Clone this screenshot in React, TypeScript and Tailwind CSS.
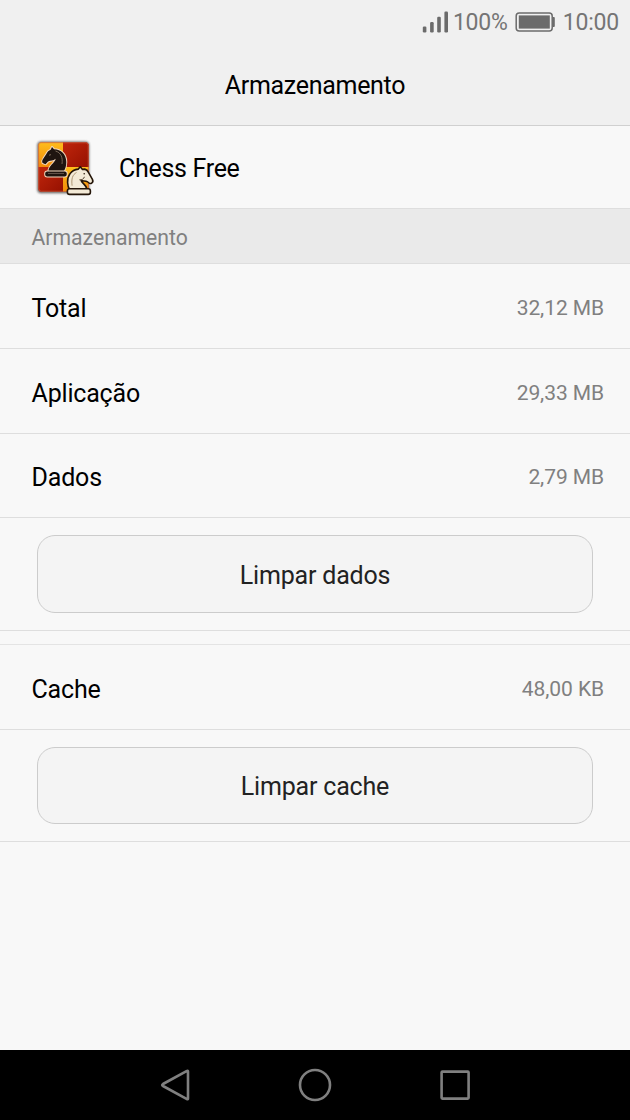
import React from 'react';

interface StorageRowProps {
  label: string;
  value: string;
  className?: string;
}

function SignalIcon() {
  return (
    <svg width="27" height="22" viewBox="0 0 27 22" fill="#6b6b6b">
      <rect x="0.8" y="15.5" width="3.6" height="6" rx="1.2" />
      <rect x="8.1" y="11" width="3.6" height="10.5" rx="1.2" />
      <rect x="15.2" y="5.7" width="3.6" height="15.8" rx="1.2" />
      <rect x="22.4" y="0.5" width="3.6" height="21" rx="1.2" />
    </svg>
  );
}

function BatteryIcon() {
  return (
    <svg width="40" height="20" viewBox="0 0 40 20">
      <rect x="1.2" y="1" width="36" height="18" rx="3" fill="none" stroke="#6b6b6b" strokeWidth="1.5" />
      <rect x="3.8" y="3.4" width="31" height="13.2" fill="#6b6b6b" />
      <path d="M37.5 5h1.3q1 0 1 1v8q0 1-1 1h-1.3z" fill="#6b6b6b" />
    </svg>
  );
}

function ChessIcon() {
  return (
    <svg width="70" height="66" viewBox="0 0 70 66">
      <defs>
        <linearGradient id="red" x1="0" y1="0" x2="1" y2="1">
          <stop offset="0" stopColor="#c0260c" />
          <stop offset="1" stopColor="#941000" />
        </linearGradient>
        <linearGradient id="gold" x1="0" y1="0" x2="0" y2="1">
          <stop offset="0" stopColor="#ffbe1c" />
          <stop offset="1" stopColor="#f28a08" />
        </linearGradient>
        <clipPath id="board">
          <rect x="8.5" y="8.5" width="50" height="49" rx="2.5" />
        </clipPath>
        <filter id="shade" x="-10%" y="-10%" width="120%" height="120%">
          <feGaussianBlur stdDeviation="0.9" />
        </filter>
      </defs>
      <rect x="7.2" y="7.6" width="52" height="51.6" rx="4" fill="#55504e" opacity="0.85" filter="url(#shade)" />
      <g clipPath="url(#board)">
        <rect x="8" y="8" width="52" height="50" fill="url(#red)" />
        <rect x="8" y="8" width="25" height="25" fill="url(#gold)" />
        <rect x="33" y="33" width="27" height="26" fill="url(#gold)" />
        <rect x="8" y="33" width="25" height="26" fill="url(#red)" />
        <rect x="33" y="8" width="27" height="25" fill="url(#red)" />
      </g>
      <rect x="8.8" y="8.8" width="49.4" height="48.4" rx="2.5" fill="none" stroke="#dc7050" strokeWidth="0.7" opacity="0.7" />

      <g stroke="#f4d9bf" strokeWidth="2" strokeLinejoin="round" paintOrder="stroke">
        <path
          d="M22 13l2 2.2C31 15.5 36.2 20 36.3 28c0 4-.8 6.5-2.3 9H18.5c0-5.5 6.3-7.5 7.2-12.2-2.5 2.3-5.3 1.4-7.7 2.7l-2.5 2.7-2.9-1.2c-.9-1.8-.3-3 .8-4.5l3.1-4.8c.8-2 2.3-3.3 4.2-4z"
          fill="#1f1510"
        />
        <rect x="15.2" y="37.5" width="21.5" height="5" rx="2" fill="#1f1510" />
      </g>
      <path d="M25.5 17c5.3 1.5 7.5 6.5 6.5 13M19 21.2l2-.6" fill="none" stroke="#82715f" strokeWidth="0.9" />
      <path d="M18 39.5h16" stroke="#605047" strokeWidth="1" />

      <g stroke="#241509" strokeWidth="1.6" strokeLinejoin="round">
        <path
          d="M50.3 32.8l-2.1 2.3C41 36 37.3 41.8 37.6 48.5c.1 3 .8 5.2 2 7.2h17.3c.2-4.4-4.6-6-5.8-9.2 2.2.9 4.2.2 6.5 1.4 1.5.8 2.1 2.6 4.1 1.2 1.5-1 1.5-2.3.6-4l-4-6.9c-.6-1.8-1.7-2.7-3.5-3.1l-2.3.3z"
          fill="#f3ead7"
        />
        <rect x="37.4" y="54.8" width="23" height="5.6" rx="2.2" fill="#f3ead7" />
      </g>
      <path d="M46.5 38.5c-4 2.2-5.3 6.2-4.4 13.2" fill="none" stroke="#ae9775" strokeWidth="1" />
      <path d="M49.4 45.8c2.4.4 4.6-1 5-3" fill="none" stroke="#55422e" strokeWidth="1" />
      <circle cx="54.2" cy="39.8" r="0.8" fill="#2a1a0d" />
    </svg>
  );
}

function StorageRow({ label, value, className = 'h-[85px] pt-1.5' }: StorageRowProps) {
  return (
    <div className={`flex items-center justify-between border-b border-[#dedede] pl-[31.5px] pr-[26px] ${className}`}>
      <span className="text-[25px] leading-8 tracking-[-0.18px] text-black">{label}</span>
      <span className="-mt-0.5 text-[21px] leading-8 tracking-[-0.08px] text-[#808080]">{value}</span>
    </div>
  );
}

function ActionButton({ children, className = 'h-[78px]' }: { children: React.ReactNode; className?: string }) {
  return (
    <button className={`flex w-full items-center justify-center rounded-[18px] border border-[#cccccc] bg-[#f4f4f4] text-[25px] leading-8 tracking-[-0.18px] text-[#222222] ${className}`}>
      {children}
    </button>
  );
}

export default function App() {
  return (
    <div className="flex h-[1120px] w-[630px] flex-col overflow-hidden bg-[#f8f8f8] font-['Roboto',sans-serif]">
      <header className="flex h-[126px] shrink-0 flex-col border-b border-[#d0d0d0] bg-[#f0f0f0]">
        <div className="flex h-11 items-center justify-end pr-[11px] text-[23px] leading-7 tracking-[-0.2px] text-[#757575]">
          <span className="-mt-px">
            <SignalIcon />
          </span>
          <span className="ml-1 pt-0.5">100%</span>
          <span className="ml-[7px]">
            <BatteryIcon />
          </span>
          <span className="ml-2 pt-0.5">10:00</span>
        </div>
        <h1 className="flex flex-1 items-center justify-center pt-0.5 text-[25px] leading-8 tracking-[-0.3px] text-black">
          Armazenamento
        </h1>
      </header>

      <main className="flex-1">
        <div className="flex h-[83px] items-center border-b border-[#dedede] pl-[30px]">
          <ChessIcon />
          <span className="ml-[19px] pt-1 text-[25px] leading-8 tracking-[-0.3px] text-black">Chess Free</span>
        </div>
        <h2 className="flex h-[55px] items-center border-b border-[#dedede] bg-[#eaeaea] pl-[31.5px] pt-1 text-[21.2px] leading-7 text-[#808080]">
          Armazenamento
        </h2>

        <StorageRow label="Total" value="32,12 MB" />
        <StorageRow label="Aplicação" value="29,33 MB" />
        <StorageRow label="Dados" value="2,79 MB" className="h-[84px] pt-[5px]" />
        <div className="h-[113px] border-b border-[#dedede] px-[37px] pt-[17px]">
          <ActionButton className="h-[78px] pt-1">Limpar dados</ActionButton>
        </div>

        <div className="h-[14px] border-b border-[#e4e4e4]" />
        <StorageRow label="Cache" value="48,00 KB" />
        <div className="h-28 border-b border-[#dedede] px-[37px] pt-[17px]">
          <ActionButton className="h-[77px] pt-[3px]">Limpar cache</ActionButton>
        </div>
      </main>

      <nav className="flex h-[70px] shrink-0 items-center justify-center gap-[100px] bg-black">
        <svg width="40" height="40" viewBox="0 0 40 40" fill="none" stroke="#808080" strokeWidth="2.6">
          <path d="M33 6.5v27q0 1.2-1 .6L8 21q-1.6-1 0-2L32 5.9q1-.6 1 .6z" strokeLinejoin="round" />
        </svg>
        <svg width="40" height="40" viewBox="0 0 40 40" fill="none" stroke="#808080" strokeWidth="2.6">
          <circle cx="20" cy="20" r="15" />
        </svg>
        <svg width="40" height="40" viewBox="0 0 40 40" fill="none" stroke="#808080" strokeWidth="2.6">
          <rect x="6.6" y="6.6" width="27" height="27" rx="0.8" />
        </svg>
      </nav>
    </div>
  );
}
